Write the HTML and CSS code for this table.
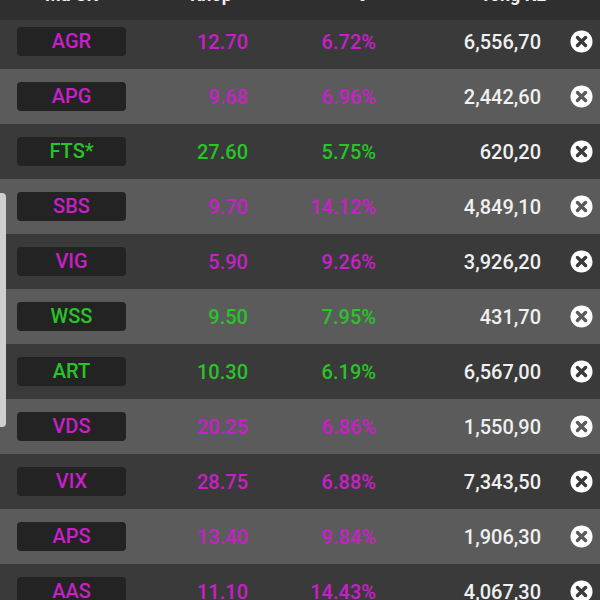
FILE: index.html
```html
<!DOCTYPE html>
<html>
<head>
<meta charset="utf-8">
<link rel="stylesheet" href="styles.css">
</head>
<body>
<div class="screen">
  <div class="header">
    <span class="h h-code">Mã CK</span>
    <span class="h h-price">Khớp</span>
    <span class="h h-pct">%</span>
    <span class="h h-vol">Tổng KL</span>
  </div>
  <div class="list">
    <div class="row dark up"><span class="badge">AGR</span><span class="num">12.70</span><span class="num">6.72%</span><span class="vol">6,556,70</span><span class="x"><svg viewBox="0 0 24 24"><circle cx="12" cy="12" r="11.5" fill="#fff"/><path d="M7.8 7.8L16.2 16.2M16.2 7.8L7.8 16.2" stroke-width="3.6" stroke-linecap="round" class="cross"/></svg></span></div>
    <div class="row light up"><span class="badge">APG</span><span class="num">9.68</span><span class="num">6.96%</span><span class="vol">2,442,60</span><span class="x"><svg viewBox="0 0 24 24"><circle cx="12" cy="12" r="11.5" fill="#fff"/><path d="M7.8 7.8L16.2 16.2M16.2 7.8L7.8 16.2" stroke-width="3.6" stroke-linecap="round" class="cross"/></svg></span></div>
    <div class="row dark green"><span class="badge">FTS*</span><span class="num">27.60</span><span class="num">5.75%</span><span class="vol">620,20</span><span class="x"><svg viewBox="0 0 24 24"><circle cx="12" cy="12" r="11.5" fill="#fff"/><path d="M7.8 7.8L16.2 16.2M16.2 7.8L7.8 16.2" stroke-width="3.6" stroke-linecap="round" class="cross"/></svg></span></div>
    <div class="row light up"><span class="badge">SBS</span><span class="num">9.70</span><span class="num">14.12%</span><span class="vol">4,849,10</span><span class="x"><svg viewBox="0 0 24 24"><circle cx="12" cy="12" r="11.5" fill="#fff"/><path d="M7.8 7.8L16.2 16.2M16.2 7.8L7.8 16.2" stroke-width="3.6" stroke-linecap="round" class="cross"/></svg></span></div>
    <div class="row dark up"><span class="badge">VIG</span><span class="num">5.90</span><span class="num">9.26%</span><span class="vol">3,926,20</span><span class="x"><svg viewBox="0 0 24 24"><circle cx="12" cy="12" r="11.5" fill="#fff"/><path d="M7.8 7.8L16.2 16.2M16.2 7.8L7.8 16.2" stroke-width="3.6" stroke-linecap="round" class="cross"/></svg></span></div>
    <div class="row light green"><span class="badge">WSS</span><span class="num">9.50</span><span class="num">7.95%</span><span class="vol">431,70</span><span class="x"><svg viewBox="0 0 24 24"><circle cx="12" cy="12" r="11.5" fill="#fff"/><path d="M7.8 7.8L16.2 16.2M16.2 7.8L7.8 16.2" stroke-width="3.6" stroke-linecap="round" class="cross"/></svg></span></div>
    <div class="row dark green"><span class="badge">ART</span><span class="num">10.30</span><span class="num">6.19%</span><span class="vol">6,567,00</span><span class="x"><svg viewBox="0 0 24 24"><circle cx="12" cy="12" r="11.5" fill="#fff"/><path d="M7.8 7.8L16.2 16.2M16.2 7.8L7.8 16.2" stroke-width="3.6" stroke-linecap="round" class="cross"/></svg></span></div>
    <div class="row light up"><span class="badge">VDS</span><span class="num">20.25</span><span class="num">6.86%</span><span class="vol">1,550,90</span><span class="x"><svg viewBox="0 0 24 24"><circle cx="12" cy="12" r="11.5" fill="#fff"/><path d="M7.8 7.8L16.2 16.2M16.2 7.8L7.8 16.2" stroke-width="3.6" stroke-linecap="round" class="cross"/></svg></span></div>
    <div class="row dark up"><span class="badge">VIX</span><span class="num">28.75</span><span class="num">6.88%</span><span class="vol">7,343,50</span><span class="x"><svg viewBox="0 0 24 24"><circle cx="12" cy="12" r="11.5" fill="#fff"/><path d="M7.8 7.8L16.2 16.2M16.2 7.8L7.8 16.2" stroke-width="3.6" stroke-linecap="round" class="cross"/></svg></span></div>
    <div class="row light up"><span class="badge">APS</span><span class="num">13.40</span><span class="num">9.84%</span><span class="vol">1,906,30</span><span class="x"><svg viewBox="0 0 24 24"><circle cx="12" cy="12" r="11.5" fill="#fff"/><path d="M7.8 7.8L16.2 16.2M16.2 7.8L7.8 16.2" stroke-width="3.6" stroke-linecap="round" class="cross"/></svg></span></div>
    <div class="row dark up"><span class="badge">AAS</span><span class="num">11.10</span><span class="num">14.43%</span><span class="vol">4,067,30</span><span class="x"><svg viewBox="0 0 24 24"><circle cx="12" cy="12" r="11.5" fill="#fff"/><path d="M7.8 7.8L16.2 16.2M16.2 7.8L7.8 16.2" stroke-width="3.6" stroke-linecap="round" class="cross"/></svg></span></div>
  </div>
  <div class="edge-handle"></div>
</div>
</body>
</html>
```
FILE: styles.css
```css
html, body {
  margin: 0;
  padding: 0;
  background: #3a3a3a;
}
.screen {
  position: relative;
  width: 600px;
  height: 600px;
  overflow: hidden;
  font-family: Roboto, "Noto Sans", sans-serif;
  font-weight: 500;
  font-size: 20px;
}
.header {
  position: relative;
  z-index: 2;
  height: 20px;
  background: #2f2f2f;
  display: grid;
  grid-template-columns: 109px 122px 128px 165px 1fr;
  padding-left: 17px;
  overflow: hidden;
  color: #f2f2f2;
  font-size: 18px;
  font-weight: 700;
}
.h {
  line-height: 20px;
  margin-top: -15px;
  white-space: nowrap;
}
.h-code { text-align: center; }
.h-price { text-align: right; padding-right: 16px; }
.h-pct { text-align: right; padding-right: 10px; }
.h-vol { text-align: right; margin-right: -5px; }
.list {
  margin-top: -6px;
}
.row {
  height: 55px;
  display: grid;
  grid-template-columns: 109px 122px 128px 165px 1fr;
  align-items: center;
  padding-left: 17px;
}
.dark { background: #3a3a3a; --bg: #3a3a3a; }
.light { background: #5b5b5b; --bg: #5b5b5b; }
.up { color: #c81fc8; }
.green { color: #28c428; }
.badge {
  height: 29px;
  line-height: 29px;
  background: #232323;
  border-radius: 4px;
  text-align: center;
}
.num {
  text-align: right;
}
.vol {
  text-align: right;
  color: #f0f0f0;
}
.x {
  justify-self: end;
  margin-right: 7px;
  width: 23px;
  height: 23px;
}
.x svg {
  display: block;
  width: 23px;
  height: 23px;
}
.cross {
  stroke: var(--bg);
}
.edge-handle {
  position: absolute;
  left: 0;
  top: 193px;
  width: 6px;
  height: 234px;
  background: #cfcfcf;
  border-radius: 0 4px 4px 0;
}
```
